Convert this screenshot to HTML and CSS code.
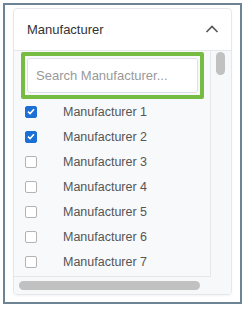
FILE: index.html
```html
<!DOCTYPE html>
<html lang="en">
<head>
    <meta charset="UTF-8">
    <meta name="viewport" content="width=device-width, initial-scale=1.0">
    <title>Manufacturer filter</title>
    <link rel="stylesheet" href="styles.css">
</head>
<body>
    <div class="frame">
        <div class="card">
            <div class="card-header">
                <span>Manufacturer</span>
                <svg class="chevron" width="14" height="8" viewBox="0 0 14 8">
                    <path d="M1.5 7 L7 1.5 L12.5 7" fill="none" stroke="#555" stroke-width="1.6"/>
                </svg>
            </div>

            <div class="card-body">
                <div class="list">
                    <!-- highlighted search field -->
                    <div class="search-wrap">
                        <input class="search" type="text" placeholder="Search Manufacturer...">
                    </div>

                    <label class="row"><span class="box checked"><svg width="8" height="7" viewBox="0 0 8 7"><path d="M1 3.6 L3.1 5.6 L7 1.2" fill="none" stroke="#fff" stroke-width="1.6"/></svg></span>Manufacturer 1</label>
                    <label class="row"><span class="box checked"><svg width="8" height="7" viewBox="0 0 8 7"><path d="M1 3.6 L3.1 5.6 L7 1.2" fill="none" stroke="#fff" stroke-width="1.6"/></svg></span>Manufacturer 2</label>
                    <label class="row"><span class="box"></span>Manufacturer 3</label>
                    <label class="row"><span class="box"></span>Manufacturer 4</label>
                    <label class="row"><span class="box"></span>Manufacturer 5</label>
                    <label class="row"><span class="box"></span>Manufacturer 6</label>
                    <label class="row"><span class="box"></span>Manufacturer 7</label>
                </div>

                <div class="vscroll">
                    <div class="vthumb"></div>
                </div>

                <div class="hscroll">
                    <div class="hthumb"></div>
                </div>
            </div>
        </div>
    </div>
</body>
</html>
```

FILE: styles.css
```css
body {
    margin: 0;
    padding: 3px;
    font-family: "Liberation Sans", Arial, sans-serif;
    background-color: #fff;
}

.frame {
    width: 239px;
    height: 301px;
    box-sizing: border-box;
    border: 2px solid #6d8495;
    padding: 3px 8px 7px 8px;
}

.card {
    height: 100%;
    box-sizing: border-box;
    border: 1px solid #e4e7eb;
    border-radius: 4px;
    display: flex;
    flex-direction: column;
    box-shadow: 0 1px 2px rgba(0, 0, 0, 0.05);
    overflow: hidden;
}

.card-header {
    height: 41px;
    flex-shrink: 0;
    display: flex;
    align-items: center;
    justify-content: space-between;
    padding: 0 12px 0 13px;
    border-bottom: 1px solid #e4e7eb;
    font-size: 13px;
    color: #333;
}

.chevron {
    margin-top: -2px;
}

.card-body {
    flex: 1;
    display: grid;
    grid-template-columns: 1fr 20px;
    grid-template-rows: 1fr 17px;
    background-color: #f7f8f9;
}

.list {
    background-color: #f8f9fb;
    border-right: 1px solid #e4e7eb;
    border-bottom: 1px solid #e4e7eb;
    padding: 1px 6px 0 7px;
}

.search-wrap {
    border: 4px solid #76bc43;
    border-radius: 2px;
    padding: 2px;
    height: 47px;
    box-sizing: border-box;
}

.search {
    display: block;
    width: 100%;
    height: 100%;
    box-sizing: border-box;
    border: 1px solid #dde1e6;
    border-radius: 3px;
    padding: 0 8px;
    font-family: inherit;
    font-size: 13px;
    color: #333;
    background-color: #fff;
    outline: none;
}

.search::placeholder {
    color: #999;
}

.row {
    display: flex;
    align-items: center;
    height: 25px;
    padding-left: 4px;
    font-size: 12.5px;
    color: #555;
}

.box {
    width: 12px;
    height: 12px;
    box-sizing: border-box;
    border: 1.5px solid #b3b3b3;
    border-radius: 2px;
    background-color: #fff;
    margin-right: 26px;
    display: flex;
    align-items: center;
    justify-content: center;
}

.box.checked {
    background-color: #1c6fd4;
    border-color: #1c6fd4;
}

.vscroll {
    padding: 1px 0 0 5px;
}

.vthumb {
    width: 9px;
    height: 23px;
    border-radius: 5px;
    background-color: #c1c1c1;
}

.hscroll {
    grid-column: 1 / 3;
    padding: 4px 0 0 5px;
}

.hthumb {
    width: 181px;
    height: 9px;
    border-radius: 5px;
    background-color: #c1c1c1;
}
```
